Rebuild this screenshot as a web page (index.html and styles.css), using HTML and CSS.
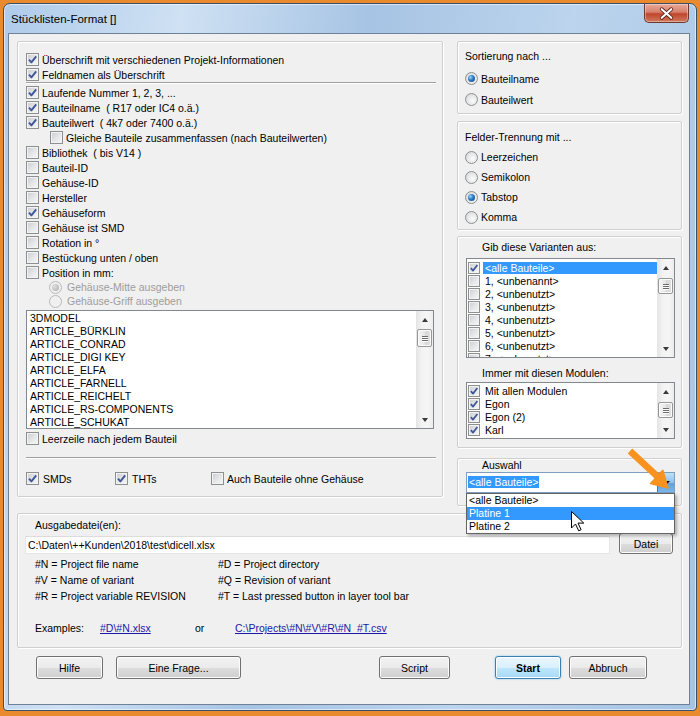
FILE: index.html
```html
<!DOCTYPE html>
<html lang="de">
<head>
<meta charset="utf-8">
<title>Stücklisten-Format</title>
<link rel="stylesheet" href="styles.css">
</head>
<body>
<svg class="defs" aria-hidden="true">
  <symbol id="tick" viewBox="0 0 11 11"><path d="M2 5.6 4.4 8.4 9.2 2.3" fill="none" stroke="#3f5797" stroke-width="1.9" stroke-linejoin="round"/></symbol>
</svg>
<div class="window">
  <div class="titlebar">
    <span class="title">Stücklisten-Format []</span>
    <div class="close"><svg viewBox="0 0 45 19" width="45" height="19"><path d="M17.5 5 27.5 14M27.5 5 17.5 14" stroke="#5a2018" stroke-width="4" stroke-linecap="round"/><path d="M17.5 5 27.5 14M27.5 5 17.5 14" stroke="#fff" stroke-width="2.2" stroke-linecap="round"/></svg></div>
  </div>
  <div class="client">
    <div class="top">
      <div class="group lg">
        <div class="row"><span class="cb on"><svg><use href="#tick"/></svg></span>Überschrift mit verschiedenen Projekt-Informationen</div>
        <div class="row"><span class="cb on"><svg><use href="#tick"/></svg></span>Feldnamen als Überschrift</div>
        <div class="sep"></div>
        <div class="row"><span class="cb on"><svg><use href="#tick"/></svg></span>Laufende Nummer 1, 2, 3, ...</div>
        <div class="row"><span class="cb on"><svg><use href="#tick"/></svg></span>Bauteilname&nbsp; ( R17 oder IC4 o.ä.)</div>
        <div class="row"><span class="cb on"><svg><use href="#tick"/></svg></span>Bauteilwert&nbsp; ( 4k7 oder 7400 o.ä.)</div>
        <div class="row ind"><span class="cb"></span>Gleiche Bauteile zusammenfassen (nach Bauteilwerten)</div>
        <div class="row"><span class="cb"></span>Bibliothek&nbsp; ( bis V14 )</div>
        <div class="row"><span class="cb"></span>Bauteil-ID</div>
        <div class="row"><span class="cb"></span>Gehäuse-ID</div>
        <div class="row"><span class="cb"></span>Hersteller</div>
        <div class="row"><span class="cb on"><svg><use href="#tick"/></svg></span>Gehäuseform</div>
        <div class="row"><span class="cb"></span>Gehäuse ist SMD</div>
        <div class="row"><span class="cb"></span>Rotation in °</div>
        <div class="row"><span class="cb"></span>Bestückung unten / oben</div>
        <div class="row"><span class="cb"></span>Position in mm:</div>
        <div class="row rsub dis"><span class="rb on"></span>Gehäuse-Mitte ausgeben</div>
        <div class="row rsub dis"><span class="rb"></span>Gehäuse-Griff ausgeben</div>
        <div class="list lst1">
          <div class="items">
            <div>3DMODEL</div>
            <div>ARTICLE_BÜRKLIN</div>
            <div>ARTICLE_CONRAD</div>
            <div>ARTICLE_DIGI KEY</div>
            <div>ARTICLE_ELFA</div>
            <div>ARTICLE_FARNELL</div>
            <div>ARTICLE_REICHELT</div>
            <div>ARTICLE_RS-COMPONENTS</div>
            <div>ARTICLE_SCHUKAT</div>
          </div>
          <div class="sb">
            <div class="sb-btn up"></div>
            <div class="track"><div class="thumb t1"><i></i><i></i><i></i></div></div>
            <div class="sb-btn dn"></div>
          </div>
        </div>
        <div class="row leer"><span class="cb"></span>Leerzeile nach jedem Bauteil</div>
        <div class="sep sep2"></div>
        <div class="row smd">
          <span class="opt o1"><span class="cb on"><svg><use href="#tick"/></svg></span>SMDs</span>
          <span class="opt o2"><span class="cb on"><svg><use href="#tick"/></svg></span>THTs</span>
          <span class="opt"><span class="cb"></span>Auch Bauteile ohne Gehäuse</span>
        </div>
      </div>

      <div class="rcol">
        <div class="group g1">
          <div class="gtitle">Sortierung nach ...</div>
          <div class="rrow r21"><span class="rb on"></span>Bauteilname</div>
          <div class="rrow r21"><span class="rb"></span>Bauteilwert</div>
        </div>
        <div class="group g2">
          <div class="gtitle">Felder-Trennung mit ...</div>
          <div class="rrow r20"><span class="rb"></span>Leerzeichen</div>
          <div class="rrow r20"><span class="rb"></span>Semikolon</div>
          <div class="rrow r20"><span class="rb on"></span>Tabstop</div>
          <div class="rrow r20"><span class="rb"></span>Komma</div>
        </div>
        <div class="group g3">
          <div class="glabel">Gib diese Varianten aus:</div>
          <div class="list vlist">
            <div class="items citems">
              <div class="citem"><span class="cb sm on"><svg><use href="#tick"/></svg></span><span class="ctext sel">&lt;alle Bauteile&gt;</span></div>
              <div class="citem"><span class="cb sm"></span><span class="ctext">1, &lt;unbenannt&gt;</span></div>
              <div class="citem"><span class="cb sm"></span><span class="ctext">2, &lt;unbenutzt&gt;</span></div>
              <div class="citem"><span class="cb sm"></span><span class="ctext">3, &lt;unbenutzt&gt;</span></div>
              <div class="citem"><span class="cb sm"></span><span class="ctext">4, &lt;unbenutzt&gt;</span></div>
              <div class="citem"><span class="cb sm"></span><span class="ctext">5, &lt;unbenutzt&gt;</span></div>
              <div class="citem"><span class="cb sm"></span><span class="ctext">6, &lt;unbenutzt&gt;</span></div>
              <div class="citem"><span class="cb sm"></span><span class="ctext">7, &lt;unbenutzt&gt;</span></div>
            </div>
            <div class="sb">
              <div class="sb-btn up"></div>
              <div class="track"><div class="thumb t2"><i></i><i></i><i></i></div></div>
              <div class="sb-btn dn"></div>
            </div>
          </div>
          <div class="glabel l2">Immer mit diesen Modulen:</div>
          <div class="list mlist">
            <div class="items citems m">
              <div class="citem"><span class="cb sm on"><svg><use href="#tick"/></svg></span><span class="ctext">Mit allen Modulen</span></div>
              <div class="citem"><span class="cb sm on"><svg><use href="#tick"/></svg></span><span class="ctext">Egon</span></div>
              <div class="citem"><span class="cb sm on"><svg><use href="#tick"/></svg></span><span class="ctext">Egon (2)</span></div>
              <div class="citem"><span class="cb sm on"><svg><use href="#tick"/></svg></span><span class="ctext">Karl</span></div>
            </div>
            <div class="sb">
              <div class="sb-btn up"></div>
              <div class="track"><div class="thumb t2"><i></i><i></i><i></i></div></div>
              <div class="sb-btn dn"></div>
            </div>
          </div>
        </div>
        <div class="group g4">
          <div class="glabel a">Auswahl</div>
          <div class="combo">
            <div class="cfield"><span class="csel">&lt;alle Bauteile&gt;</span></div>
            <div class="cbtn"></div>
            <div class="dropdown">
              <div class="ditem">&lt;alle Bauteile&gt;</div>
              <div class="ditem hl">Platine 1</div>
              <div class="ditem">Platine 2</div>
            </div>
          </div>
        </div>
      </div>
    </div>

    <div class="group out">
      <div class="olabel">Ausgabedatei(en):</div>
      <div class="frow">
        <div class="field">C:\Daten\++Kunden\2018\test\dicell.xlsx</div>
        <button class="btn datei">Datei</button>
      </div>
      <div class="legend">
        <span>#N = Project file name</span><span>#D = Project directory</span>
        <span>#V = Name of variant</span><span>#Q = Revision of variant</span>
        <span>#R = Project variable REVISION</span><span>#T = Last pressed button in layer tool bar</span>
      </div>
      <div class="examples">
        <span class="ex1">Examples:</span><a class="lnk ex2">#D\#N.xlsx</a><span class="ex3">or</span><a class="lnk">C:\Projects\#N\#V\#R\#N_#T.csv</a>
      </div>
    </div>

    <div class="buttons">
      <button class="btn b-hilfe">Hilfe</button>
      <button class="btn b-frage">Eine Frage...</button>
      <button class="btn b-script">Script</button>
      <button class="btn b-start">Start</button>
      <button class="btn b-abbruch">Abbruch</button>
    </div>
  </div>
</div>
<svg class="overlay" viewBox="0 0 700 716" width="700" height="716">
  <path d="M630 451 658 477" stroke="#f7921e" stroke-width="6.5" fill="none"/>
  <path d="M668 488 650.6 483.6 662.8 470.2Z" fill="#f7921e" stroke="#f7921e" stroke-width="1.5" stroke-linejoin="round"/>
  <path d="M571.5 511.5v16.5l4-4 3.2 6.8 2.4-1.1-3.1-6.6h5.8z" fill="#fff" stroke="#000" stroke-width="1" stroke-linejoin="round"/>
</svg>
</body>
</html>
```

FILE: styles.css
```css
* { box-sizing: border-box; }

body {
  margin: 0;
  width: 700px;
  height: 716px;
  overflow: hidden;
  position: relative;
  background: #ea8a2e;
  font-family: "Liberation Sans", Arial, sans-serif;
  font-size: 10.5px;
  color: #000;
}

.defs { position: absolute; width: 0; height: 0; }

.window {
  margin: 3px 3px 0;
  height: 708px;
  border: 1px solid #3a4e66;
  border-radius: 7px 7px 4px 4px;
  background: linear-gradient(100deg, #aecbea 0%, #cfe1f3 22%, #a7c4e4 45%, #bcd4ed 70%, #a6c3e3 100%);
  box-shadow: inset 0 0 0 1px rgba(255,255,255,0.55);
  padding: 0 6px 5px 4px;
  display: flex;
  flex-direction: column;
}

.titlebar {
  height: 29px;
  display: flex;
  align-items: flex-start;
  flex: none;
}
.title {
  margin: 8px 0 0 3px;
  font-size: 11.5px;
  line-height: 15px;
  color: #000;
}
.close {
  margin-left: auto;
  margin-right: 1px;
  width: 45px;
  height: 19px;
  border: 1px solid #6b3a33;
  border-top: none;
  border-radius: 0 0 5px 5px;
  background: linear-gradient(#e9a99a 0%, #d7806c 45%, #c0452d 55%, #d07a5d 100%);
  box-shadow: inset 0 0 0 1px rgba(255,255,255,0.35);
  display: flex;
  align-items: center;
  justify-content: center;
  overflow: hidden;
}
.close svg { display: block; }

.client {
  height: 672px;
  background: #f0f0f0;
  border: 1px solid #6d8299;
  padding: 7px 7px 0 8px;
  display: flex;
  flex-direction: column;
}

.top {
  display: flex;
  gap: 14px;
  align-items: flex-start;
  height: 456px;
  flex: none;
}

.group {
  border: 1px solid #cfcfcf;
  border-radius: 2px;
  box-shadow: inset 1px 1px 0 #fff, 1px 1px 0 #fff;
}

/* left group */
.lg {
  width: 426px;
  height: 456px;
  padding: 10px 8px 0 8px;
}
.row {
  display: flex;
  align-items: center;
  height: 15px;
  white-space: nowrap;
}
.row.ind { padding-left: 24px; }
.row.rsub { height: 14px; padding-left: 23px; }
.row.rsub .rb { margin-right: 5px; }
.dis { color: #9d9d9d; }

.cb {
  position: relative;
  flex: none;
  width: 13px;
  height: 13px;
  margin-right: 3px;
  border: 1px solid #8e8f8f;
  background: linear-gradient(135deg, #c9ccd1 0%, #e6e7e9 55%, #f7f7f7 100%);
  box-shadow: inset 0 0 0 1px #f3f3f3;
}
.cb svg {
  position: absolute;
  left: 0;
  top: 0;
  width: 11px;
  height: 11px;
}
.cb.sm { width: 12px; height: 12px; }
.cb.sm svg { width: 10px; height: 10px; }

.rb {
  position: relative;
  flex: none;
  width: 13px;
  height: 13px;
  margin-right: 3px;
  border-radius: 50%;
  border: 1px solid #8e8f8f;
  background: radial-gradient(circle at 60% 60%, #fbfbfb 0%, #e3e4e6 60%, #c8cbd0 100%);
}
.rb.on::after {
  content: "";
  position: absolute;
  left: 2px;
  top: 2px;
  width: 7px;
  height: 7px;
  border-radius: 50%;
  background: radial-gradient(circle at 35% 35%, #9fd4fa 0%, #2a78c8 45%, #0f3f7c 100%);
}
.dis .rb { border-color: #b8b8b8; background: #f0f0f0; }
.dis .rb.on::after { background: radial-gradient(circle at 35% 35%, #e0e0e0, #a9a9a9); }

.sep {
  border-top: 1px solid #a0a0a0;
  border-bottom: 1px solid #fff;
  margin: 0 -2px 1px 0;
}
.sep.sep2 { margin: 11px -2px 12px 0; }

.list {
  display: flex;
  border: 1px solid #828790;
  background: #fff;
  overflow: hidden;
}
.lst1 { height: 119px; margin-top: 2px; }
.items {
  flex: 1;
  min-width: 0;
  padding: 1px 0 0 3px;
  line-height: 13px;
  overflow: hidden;
  white-space: nowrap;
}
.leer { margin-top: 2px; }

.smd .opt { display: flex; align-items: center; }
.smd .o1 { width: 89px; }
.smd .o2 { width: 96px; }
.smd .o1 .cb, .smd .o2 .cb { margin-right: 4px; }

/* scrollbars */
.sb {
  width: 17px;
  flex: none;
  display: flex;
  flex-direction: column;
  background: linear-gradient(to right, #e4e4e4, #f3f3f3 35%, #f5f5f5 70%, #ececec);
}
.sb-btn {
  height: 17px;
  flex: none;
  display: flex;
  align-items: center;
  justify-content: center;
}
.sb-btn.up::before {
  content: "";
  border-left: 3px solid transparent;
  border-right: 3px solid transparent;
  border-bottom: 4px solid #3a3a3a;
}
.sb-btn.dn::before {
  content: "";
  border-left: 3px solid transparent;
  border-right: 3px solid transparent;
  border-top: 4px solid #3a3a3a;
}
.track { flex: 1; }
.thumb {
  margin: 1px 1px 0;
  border: 1px solid #979797;
  border-radius: 2px;
  background: linear-gradient(to right, #f5f5f5, #e6e6e6 50%, #d6d6d6 51%, #e0e0e0);
  box-shadow: inset 0 0 0 1px #fbfbfb;
  display: flex;
  flex-direction: column;
  align-items: center;
  justify-content: center;
  gap: 1px;
}
.thumb i {
  display: block;
  width: 6px;
  height: 1px;
  background: #6b6b6b;
  box-shadow: 0 1px 0 #fff;
}
.thumb.t1 { height: 18px; }
.thumb.t2 { height: 16px; margin-top: 2px; }

/* right column */
.rcol {
  width: 225px;
  display: flex;
  flex-direction: column;
}
.gtitle {
  line-height: 14px;
  height: 14px;
  white-space: nowrap;
}
.rrow {
  display: flex;
  align-items: center;
  white-space: nowrap;
}
.rrow .rb { margin-right: 3px; }
.r21 { height: 21px; }
.r20 { height: 20px; }

.g1 {
  height: 73px;
  padding: 7px 7px 0 7px;
}
.g1 .gtitle { margin-bottom: 5px; }
.g2 {
  height: 109px;
  margin-top: 7px;
  padding: 8px 7px 0 7px;
}
.g2 .gtitle { margin-bottom: 3px; }
.g3 {
  height: 212px;
  margin-top: 6px;
  padding: 3px 6px 0 8px;
}
.glabel {
  padding-left: 16px;
  line-height: 14px;
  height: 14px;
  white-space: nowrap;
}
.glabel.l2 { margin-top: 8px; }
.vlist { height: 100px; margin-top: 4px; }
.mlist { height: 57px; margin-top: 2px; }
.citems { padding: 2px 0 0 1px; }
.citems.m { padding-top: 1px; }
.citem {
  display: flex;
  align-items: center;
  height: 13px;
}
.citem .cb { margin-right: 3px; }
.ctext {
  flex: 1;
  padding-left: 2px;
  line-height: 12px;
  height: 12px;
}
.ctext.sel { background: #3399ff; color: #fff; }

.g4 {
  height: 48px;
  margin-top: 10px;
  padding: 0 6px 0 8px;
}
.glabel.a { line-height: 12px; height: 12px; }
.combo {
  position: relative;
  margin-top: 1px;
  height: 21px;
  display: flex;
  border: 1px solid #7d9ec0;
  background: #fff;
}
.cfield {
  flex: 1;
  padding: 3px 0 0 1px;
}
.csel {
  display: inline-block;
  line-height: 12px;
  padding: 0 1px;
  background: #3399ff;
  color: #fff;
}
.cbtn {
  width: 17px;
  border-left: 1px solid #3c7fb1;
  background: linear-gradient(#bfe0f8 0%, #8cc3ee 50%, #5d9fdc 51%, #7cb6e8 100%);
  display: flex;
  align-items: center;
  justify-content: center;
}
.cbtn::before {
  content: "";
  border-left: 4px solid transparent;
  border-right: 4px solid transparent;
  border-top: 4px solid #000;
}
.dropdown {
  position: absolute;
  left: -1px;
  right: -1px;
  top: 20px;
  height: 41px;
  border: 1px solid #646464;
  background: #fff;
  box-shadow: 2px 2px 3px rgba(0,0,0,0.28);
  z-index: 5;
}
.ditem {
  height: 13px;
  line-height: 13px;
  padding-left: 2px;
  white-space: nowrap;
}
.ditem.hl { background: #3399ff; color: #fff; }

/* output group */
.out {
  margin-top: 16px;
  height: 135px;
  flex: none;
  padding: 4px 8px 0 8px;
}
.olabel {
  padding-left: 9px;
  line-height: 14px;
  height: 14px;
}
.frow {
  margin-top: 1px;
  height: 21px;
  display: flex;
  align-items: flex-end;
}
.field {
  margin-left: -1px;
  width: 585px;
  height: 18px;
  line-height: 16px;
  padding-left: 2px;
  background: #fff;
  border: 1px solid #e6e6e6;
  border-top-color: #dcdcdc;
  white-space: nowrap;
}
.legend {
  margin-top: 2px;
  padding-left: 9px;
  display: grid;
  grid-template-columns: 183px auto;
  grid-auto-rows: 16px;
  line-height: 16px;
  white-space: nowrap;
}
.examples {
  margin-top: 16px;
  padding-left: 9px;
  height: 16px;
  line-height: 16px;
  display: flex;
  white-space: nowrap;
}
.ex1 { width: 65px; }
.ex2 { width: 95px; }
.ex3 { width: 40px; }
.lnk {
  color: #1a1aa6;
  text-decoration: underline;
}

/* buttons */
.btn {
  font-family: "Liberation Sans", Arial, sans-serif;
  font-size: 10.5px;
  color: #000;
  height: 23px;
  padding: 0;
  border: 1px solid #707070;
  border-radius: 3px;
  background: linear-gradient(#f2f2f2 0%, #ebebeb 50%, #dddddd 51%, #cfcfcf 100%);
  box-shadow: inset 0 0 0 1px #fcfcfc;
}
.btn.datei { width: 54px; height: 21px; margin-left: 9px; }
.buttons {
  margin-top: 8px;
  display: flex;
  height: 23px;
  flex: none;
}
.b-hilfe { width: 67px; margin-left: 19px; }
.b-frage { width: 125px; margin-left: 13px; }
.b-script { width: 71px; margin-left: 138px; }
.b-start {
  width: 66px;
  margin-left: 45px;
  font-weight: bold;
  border-color: #3c7fb1;
  background: linear-gradient(#eaf6fd 0%, #d9f0fc 50%, #bee6fd 51%, #a7d9f5 100%);
  box-shadow: inset 0 0 0 1px #fff, 0 0 2px #6fc2ee;
}
.b-abbruch { width: 78px; margin-left: 8px; }

.overlay {
  position: absolute;
  left: 0;
  top: 0;
  pointer-events: none;
  z-index: 10;
}
```
